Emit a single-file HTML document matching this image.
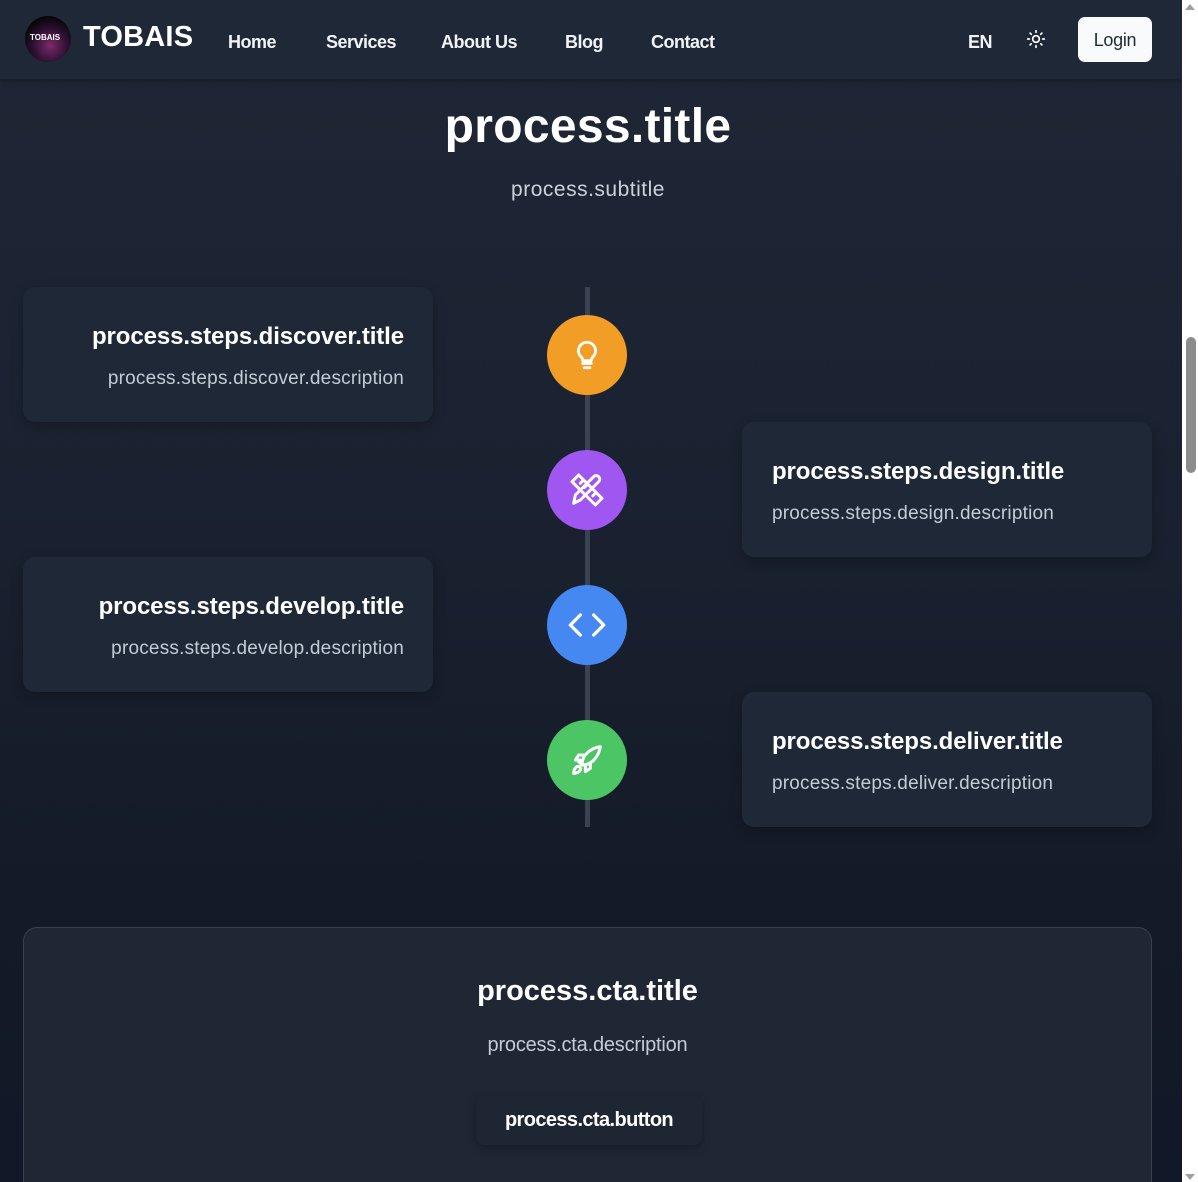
<!DOCTYPE html>
<html><head><meta charset="utf-8"><style>
*{margin:0;padding:0;box-sizing:border-box}
html,body{width:1198px;height:1182px;overflow:hidden}
body{font-family:"Liberation Sans",sans-serif;background:linear-gradient(#1f2736 0,#1a2130 500px,#141a27 900px,#111827 1182px);color:#fff;position:relative}
.sb{position:absolute;left:1182px;top:0;width:16px;height:1182px;background:#fff}
.sb .th{position:absolute;left:4px;top:337px;width:10px;height:136px;background:#8c8c8c;border-radius:5px}
.sb .up{position:absolute;left:3px;top:4px;width:0;height:0;border-left:5px solid transparent;border-right:5px solid transparent;border-bottom:6px solid #a0a0a0}
.sb .dn{position:absolute;left:3px;top:1174px;width:0;height:0;border-left:5px solid transparent;border-right:5px solid transparent;border-top:6px solid #a0a0a0}
nav{position:absolute;left:0;top:0;width:1182px;height:79px;background:#1f2837;box-shadow:0 2px 6px rgba(0,0,0,.3)}
.logo{position:absolute;left:25px;top:16px;width:46px;height:46px;border-radius:50%;background:radial-gradient(circle at 55% 65%,#7a2a6a 0,#2a1030 45%,#05050a 75%);overflow:hidden}
.logo span{position:absolute;left:5px;top:17px;font-size:8px;font-weight:bold;color:#fff}
.brand{position:absolute;left:83px;top:21px;font-size:29px;font-weight:bold;letter-spacing:.2px}
.nl{position:absolute;top:32px;font-size:18px;font-weight:bold;color:#f1f3f6;letter-spacing:-.5px}
.login{position:absolute;left:1078px;top:17px;width:74px;height:45px;background:#f8fafc;border-radius:7px;color:#1f2937;font-size:18px;text-align:center;line-height:47px;letter-spacing:-.3px}
h1{position:absolute;left:0;width:1176px;top:99px;text-align:center;font-size:48px;font-weight:bold;letter-spacing:.3px}
.sub{position:absolute;left:0;width:1176px;top:178px;text-align:center;font-size:21px;color:#cbd2dc;letter-spacing:.5px}
.line{position:absolute;left:585px;top:287px;width:5px;height:540px;background:#3b4352}
.card{position:absolute;width:410px;height:135px;background:#1f2837;border-radius:12px;box-shadow:0 4px 12px rgba(0,0,0,.25)}
.card h3{position:absolute;top:36px;font-size:24px;font-weight:bold;letter-spacing:-.1px;white-space:nowrap}
.card p{position:absolute;top:81px;font-size:19px;color:#c4cbd6;letter-spacing:.2px;white-space:nowrap}
.L h3,.L p{right:29px}
.R h3,.R p{left:30px}
.c{position:absolute;left:547px;width:80px;height:80px;border-radius:50%;display:flex;align-items:center;justify-content:center}
.cta{position:absolute;left:23px;top:927px;width:1129px;height:280px;background:#1f2735;border:1px solid #374151;border-radius:14px}
.cta h2{position:absolute;left:0;width:100%;top:47px;text-align:center;font-size:29px;font-weight:bold;letter-spacing:0}
.cta p{position:absolute;left:0;width:100%;top:106px;text-align:center;font-size:20px;color:#c4cbd6;letter-spacing:-.2px}
.btn{position:absolute;left:452px;top:167px;width:226px;height:50px;background:#1e2634;border-radius:8px;box-shadow:0 3px 8px rgba(0,0,0,.3);text-align:center;line-height:50px;font-size:20px;font-weight:bold;letter-spacing:-.6px}
</style></head><body>
<nav>
<div class="logo"><span>TOBAIS</span></div>
<div class="brand">TOBAIS</div>
<div class="nl" style="left:228px">Home</div>
<div class="nl" style="left:326px">Services</div>
<div class="nl" style="left:441px">About Us</div>
<div class="nl" style="left:565px">Blog</div>
<div class="nl" style="left:651px">Contact</div>
<div class="nl" style="left:968px">EN</div>
<svg style="position:absolute;left:1026px;top:29px" width="20" height="20" viewBox="0 0 24 24" fill="none" stroke="#fff" stroke-width="2" stroke-linecap="round"><circle cx="12" cy="12" r="4"/><path d="M12 2v2M12 20v2M4.9 4.9l1.4 1.4M17.7 17.7l1.4 1.4M2 12h2M20 12h2M4.9 19.1l1.4-1.4M17.7 6.3l1.4-1.4"/></svg>
<div class="login">Login</div>
</nav>
<h1>process.title</h1>
<div class="sub">process.subtitle</div>
<div class="line"></div>
<div class="card L" style="left:23px;top:287px"><h3>process.steps.discover.title</h3><p>process.steps.discover.description</p></div>
<div class="card R" style="left:742px;top:422px"><h3>process.steps.design.title</h3><p>process.steps.design.description</p></div>
<div class="card L" style="left:23px;top:557px"><h3>process.steps.develop.title</h3><p>process.steps.develop.description</p></div>
<div class="card R" style="left:742px;top:692px"><h3>process.steps.deliver.title</h3><p>process.steps.deliver.description</p></div>
<div class="c" style="top:315px;background:#f19d26"><svg width="34" height="34" viewBox="0 0 24 24" fill="none" stroke="#fff" stroke-width="2" stroke-linecap="round" stroke-linejoin="round"><path d="M9 18h6M10 21h4M12 3a6 6 0 0 0-4 10.5c.8.8 1 1.5 1 2.5h6c0-1 .2-1.7 1-2.5A6 6 0 0 0 12 3z"/></svg></div>
<div class="c" style="top:450px;background:#a056f0"><svg width="40" height="40" viewBox="0 0 24 24" fill="none" stroke="#fff" stroke-width="1.8" stroke-linecap="round" stroke-linejoin="round"><path d="M3 7l4-4 14 14-4 4z"/><path d="M8 8l1.5-1.5M10.5 10.5l1.5-1.5M13 13l1.5-1.5M15.5 15.5l1.5-1.5"/><path d="M4 20l1-5L16 4a2 2 0 0 1 3 3L8 18z"/></svg></div>
<div class="c" style="top:585px;background:#4688f1"><svg width="40" height="40" viewBox="0 0 24 24" fill="none" stroke="#fff" stroke-width="2" stroke-linecap="round" stroke-linejoin="round"><path d="M8 6l-6 6 6 6M16 6l6 6-6 6"/></svg></div>
<div class="c" style="top:720px;background:#4cc564"><svg width="40" height="40" viewBox="0 0 24 24" fill="none" stroke="#fff" stroke-width="1.8" stroke-linecap="round" stroke-linejoin="round"><path d="M9 15c0-6 5-10 11-11-1 6-5 11-11 11z"/><path d="M9 15l-2-2M11 16v3l3-2v-3"/><path d="M8 12H5l2-3h3"/><path d="M6 16c-2 1-2 4-2 4s3 0 4-2a1.5 1.5 0 0 0-2-2z"/></svg></div>
<div class="cta"><h2>process.cta.title</h2><p>process.cta.description</p><div class="btn">process.cta.button</div></div>
<div class="sb"><div class="up"></div><div class="th"></div><div class="dn"></div></div>
</body></html>
